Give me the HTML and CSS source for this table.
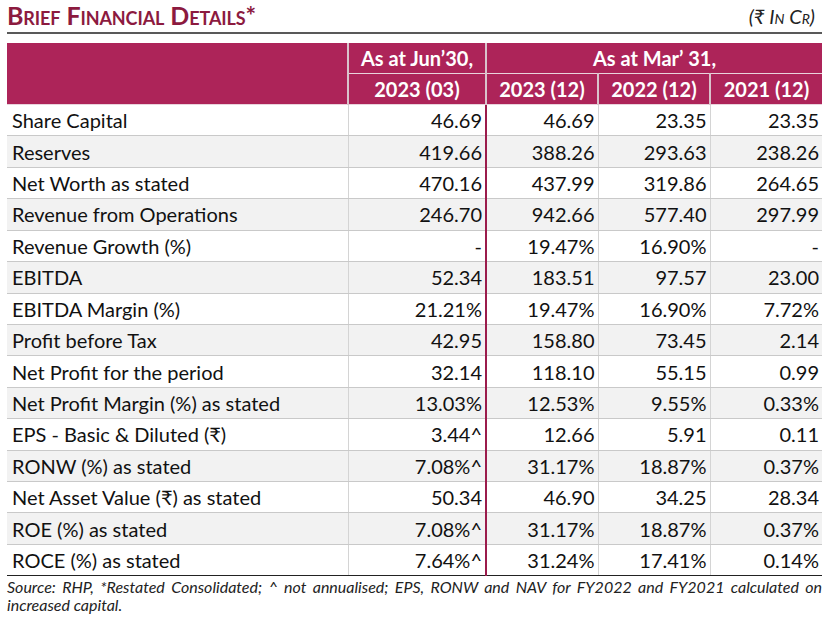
FILE: index.html
```html
<!DOCTYPE html>
<html>
<head>
<meta charset="utf-8">
<link rel="stylesheet" href="styles.css">
</head>
<body>
<div class="page">
  <div class="title-bar">
    <h1 class="title">Brief Financial Details*</h1>
    <span class="unit">(₹ In Cr)</span>
  </div>
  <table class="fin">
    <thead>
      <tr>
        <th class="blank" rowspan="2"></th>
        <th class="h1">As at Jun’30,</th>
        <th class="h1" colspan="3">As at Mar’ 31,</th>
      </tr>
      <tr>
        <th class="h2">2023 (03)</th>
        <th class="h2">2023 (12)</th>
        <th class="h2">2022 (12)</th>
        <th class="h2">2021 (12)</th>
      </tr>
    </thead>
    <tbody>
      <tr><td>Share Capital</td><td>46.69</td><td>46.69</td><td>23.35</td><td>23.35</td></tr>
      <tr><td>Reserves</td><td>419.66</td><td>388.26</td><td>293.63</td><td>238.26</td></tr>
      <tr><td>Net Worth as stated</td><td>470.16</td><td>437.99</td><td>319.86</td><td>264.65</td></tr>
      <tr><td>Revenue from Operations</td><td>246.70</td><td>942.66</td><td>577.40</td><td>297.99</td></tr>
      <tr><td>Revenue Growth (%)</td><td>-</td><td>19.47%</td><td>16.90%</td><td>-</td></tr>
      <tr><td>EBITDA</td><td>52.34</td><td>183.51</td><td>97.57</td><td>23.00</td></tr>
      <tr><td>EBITDA Margin (%)</td><td>21.21%</td><td>19.47%</td><td>16.90%</td><td>7.72%</td></tr>
      <tr><td>Profit before Tax</td><td>42.95</td><td>158.80</td><td>73.45</td><td>2.14</td></tr>
      <tr><td>Net Profit for the period</td><td>32.14</td><td>118.10</td><td>55.15</td><td>0.99</td></tr>
      <tr><td>Net Profit Margin (%) as stated</td><td>13.03%</td><td>12.53%</td><td>9.55%</td><td>0.33%</td></tr>
      <tr><td>EPS - Basic &amp; Diluted (₹)</td><td>3.44^</td><td>12.66</td><td>5.91</td><td>0.11</td></tr>
      <tr><td>RONW (%) as stated</td><td>7.08%^</td><td>31.17%</td><td>18.87%</td><td>0.37%</td></tr>
      <tr><td>Net Asset Value (₹) as stated</td><td>50.34</td><td>46.90</td><td>34.25</td><td>28.34</td></tr>
      <tr><td>ROE (%) as stated</td><td>7.08%^</td><td>31.17%</td><td>18.87%</td><td>0.37%</td></tr>
      <tr><td>ROCE (%) as stated</td><td>7.64%^</td><td>31.24%</td><td>17.41%</td><td>0.14%</td></tr>
    </tbody>
  </table>
  <p class="note">Source: RHP, *Restated Consolidated; ^ not annualised; EPS, RONW and NAV for FY2022 and FY2021 calculated on increased capital.</p>
</div>
</body>
</html>
```

FILE: styles.css
```css
html, body {
  margin: 0;
  padding: 0;
  background: #ffffff;
}
body {
  font-family: Lato, "Open Sans", "Liberation Sans", sans-serif;
  color: #111;
}
.page {
  width: 815px;
  margin-left: 7px;
}
.title-bar {
  display: flex;
  justify-content: space-between;
  align-items: flex-end;
  border-bottom: 2px solid #595959;
  height: 34px;
  box-sizing: border-box;
  padding-bottom: 4px;
}
.title {
  margin: 0;
  font-size: 25px;
  font-weight: 700;
  font-variant: small-caps;
  color: #8c1a3f;
  line-height: 26px;
  letter-spacing: -0.1px;
}
.unit {
  font-size: 20px;
  font-style: italic;
  font-variant: small-caps;
  color: #222;
  margin-right: 7px;
  line-height: 24px;
}
.fin {
  margin-top: 9px;
  width: 815px;
  border-collapse: collapse;
  table-layout: fixed;
  font-size: 20px;
}
.fin th {
  background: #ad2459;
  color: #ffffff;
  font-weight: 700;
  height: 30px;
  padding: 0;
  text-align: center;
  border-left: 2px solid #d9c3cc;
  border-bottom: 1px solid #e9d3dc;
}
.fin th.blank {
  width: 340px;
  border-left: none;
}
.fin thead tr:first-child th:nth-child(2) { width: 136px; }
.fin thead tr:nth-child(2) th:nth-child(2) { width: 114px; }
.fin thead tr:nth-child(2) th:nth-child(3) { width: 113px; }
.fin thead tr:nth-child(2) th:nth-child(4) { width: 112px; }
.fin td {
  height: 31.43px;
  padding: 0 3px 0 5px;
  text-align: right;
  border-bottom: 1px solid #c9c9c9;
  border-left: 1px solid #d4d4d4;
  white-space: nowrap;
  box-sizing: border-box;
}
.fin td:first-child {
  text-align: left;
  border-left: none;
}
.fin td:nth-child(3) {
  border-left: 2px solid #9b1c4c;
}
.fin tbody tr:nth-child(even) td {
  background: #f2f2f2;
}
.fin tbody tr:last-child td {
  border-bottom: 1px solid #222;
}
.note {
  margin: 2px 0 0 0;
  font-size: 16px;
  font-style: italic;
  line-height: 18px;
  text-align: justify;
  color: #222;
}
```
